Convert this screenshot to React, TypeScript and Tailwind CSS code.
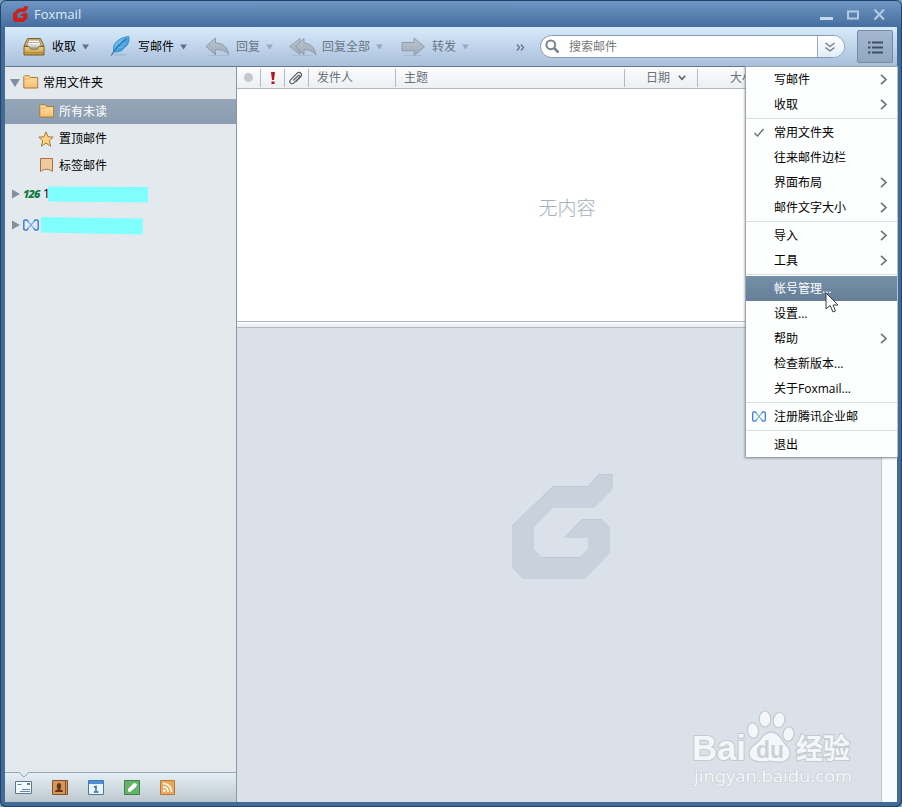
import type { ReactNode } from 'react';

function Caret({ light = false }: { light?: boolean }) {
  return (
    <svg width="7" height="6" viewBox="0 0 8 6" preserveAspectRatio="none" className="shrink-0">
      <path d="M0 .5h8L4 5.5z" fill={light ? '#96a9be' : '#5c728b'} />
    </svg>
  );
}

function FoxLogo() {
  return (
    <svg width="15" height="16" viewBox="0 0 102 105" preserveAspectRatio="none">
      <path d="M0 50 36 16H66L80 0H100V20L80 40H46L28 56V70L36 78H64L70 72V66H48L68 46H92L98 53V80L73 105H14L0 92z" fill="#c9221d" />
    </svg>
  );
}

function InboxIcon() {
  return (
    <svg width="22" height="20" viewBox="0 0 22 20">
      <defs>
        <linearGradient id="tray" x2="0" y2="1"><stop stopColor="#ecd692" /><stop offset="1" stopColor="#bd943c" /></linearGradient>
      </defs>
      <path d="M4.500 1.500h13L21 9H1z" fill="#d8bd7c" stroke="#7d632d" />
      <path d="M5.500 3h11l1.800 7H3.700z" fill="#fff" stroke="#8e7749" strokeWidth=".8" />
      <path d="M5 5.500h12M4.500 8h13" stroke="#a39b8a" strokeWidth=".8" />
      <path d="M1 9.500h4.800c1 0 .8 2.500 2 2.500h6.400c1.200 0 1-2.500 2-2.500H21v8.500H1z" fill="url(#tray)" stroke="#7c5d20" />
      <path d="M2 15.500h18" stroke="#b3893a" />
    </svg>
  );
}

function FeatherIcon() {
  return (
    <svg width="21" height="21" viewBox="0 0 21 21">
      <defs>
        <linearGradient id="quill" x2="1" y2="1"><stop stopColor="#8fd4f8" /><stop offset="1" stopColor="#1d7dca" /></linearGradient>
      </defs>
      <ellipse cx="10" cy="18.800" rx="7" ry="1" fill="#8fb3d3" opacity=".6" />
      <path d="M3.800 15.500C2.800 11 4 7.500 8 4.500 11 2.200 15 .8 18.800.5c.6 3.500-.1 6.500-2 9-1 1.300-2 1.500-3 3-2 2.500-5.500 3.500-8.800 3.500z" fill="url(#quill)" stroke="#2a82c4" strokeWidth=".8" />
      <path d="M1.200 19.500C5 13 9.500 8 16.500 2.800" fill="none" stroke="#1f6dad" strokeWidth="1.100" />
      <path d="m6 11 1.500-4.500M9 8l2-4M8.500 11.500l5-.5M11.500 8l4.500-.5" stroke="#7cc6f0" strokeWidth=".6" />
    </svg>
  );
}

function ArrowDefs() {
  return (
    <defs>
      <linearGradient id="arrowGrey" x2="0" y2="1"><stop stopColor="#bdc7d0" /><stop offset="1" stopColor="#9daab7" /></linearGradient>
    </defs>
  );
}

function ReplyIcon() {
  return (
    <svg width="25" height="20" viewBox="0 0 25 20">
      <ArrowDefs />
      <path d="M1 9.500 10.500 1v5c7 0 12 3.500 13.200 11.500C21 14 17 12.500 10.500 12.700V18z" fill="url(#arrowGrey)" stroke="#8f9dab" />
      <path d="M3 18.500h21" stroke="#a2b5c8" strokeWidth=".7" />
    </svg>
  );
}

function ReplyAllIcon() {
  return (
    <svg width="28" height="20" viewBox="0 0 28 20">
      <path d="M.8 9.500 11 1.500v3L7 9.500l4 5v3z" fill="url(#arrowGrey)" stroke="#8f9dab" />
      <path d="M6.500 9.500 15 1.500v4.700c6 0 10.500 4 12 11.800C24 14 20 12.800 15 12.800v5z" fill="url(#arrowGrey)" stroke="#8f9dab" />
      <path d="M3 18.500h21" stroke="#a2b5c8" strokeWidth=".7" />
    </svg>
  );
}

function ForwardIcon() {
  return (
    <svg width="25" height="20" viewBox="0 0 25 20">
      <path d="M1 5.500h12V1l10.500 8.800L13 18.500v-4.700H1z" fill="url(#arrowGrey)" stroke="#8f9dab" />
      <path d="M2 18.500h18" stroke="#a2b5c8" strokeWidth=".7" />
    </svg>
  );
}

function FolderIcon() {
  return (
    <svg width="16" height="14" viewBox="0 0 16 14" className="shrink-0">
      <defs>
        <linearGradient id="folder" x2="0" y2="1"><stop stopColor="#ffe0a3" /><stop offset="1" stopColor="#f5bf74" /></linearGradient>
      </defs>
      <path d="M.8 13V1.500L1.500.8h4.700l1.300 1.700h7.200V13z" fill="url(#folder)" stroke="#ab7a35" />
      <path d="M1.500 4h5l1-1.500" fill="none" stroke="#d8a45b" strokeWidth=".8" />
    </svg>
  );
}

function InfinityMark({ compact = false }: { compact?: boolean }) {
  return (
    <svg width={compact ? 14 : 16} height={compact ? 11 : 12} viewBox="0 0 16 12" preserveAspectRatio="none" className={compact ? 'ml-px shrink-0' : 'shrink-0'}>
      <g fill="none" strokeWidth="1.500" stroke="#3f7fd4">
        <path d="M5.300 2.800 3.800.9H1.800l-1 1v8.200l1 1h2l1.500-1.900" />
        <path d="m10.700 2.800 1.500-1.900h2l1 1v8.200l-1 1h-2l-1.500-1.900" />
        <path d="m5.300 2.800 5.400 6.400M10.700 2.800 5.300 9.200" stroke="#6aa9ea" strokeWidth="1.100" />
      </g>
    </svg>
  );
}

function Tool({ icon, label, width, disabled, gap }: { icon: ReactNode; label: string; width: string; disabled?: boolean; gap: string }) {
  return (
    <div className={`flex h-full shrink-0 items-center ${width} ${disabled ? 'text-[#687684]' : 'text-black'}`}>
      <span className={`flex shrink-0 items-center ${gap}`}>{icon}</span>
      <span className="mr-1.5">{label}</span>
      <Caret light={disabled} />
    </div>
  );
}

function Separator() {
  return <div className="my-px h-px bg-[#d9dde0]" />;
}

function MenuItem({ label, arrow, active, mark }: { label: string; arrow?: boolean; active?: boolean; mark?: ReactNode }) {
  return (
    <div className={`flex h-[25px] items-center ${active ? 'bg-linear-to-b from-[#7690aa] to-[#667e97] text-white' : 'text-black'}`}>
      <span className="flex w-7 shrink-0 pl-[5px]">{mark}</span>
      <span className="flex-1">{label}</span>
      {arrow && (
        <svg width="8" height="11" viewBox="0 0 8 11" className="mr-[9px]">
          <path d="m1 .8 5 4.700-5 4.700" fill="none" stroke="#737373" strokeWidth="1.700" />
        </svg>
      )}
    </div>
  );
}

function MainMenu() {
  return (
    <div className="absolute top-[66px] left-[745px] w-[153px] rounded-b-xs border border-[#98a5b1] border-r-[#b8c0c8] bg-[#fdfefe] shadow-[-1px_1px_2px_#0003]">
      <MenuItem label="写邮件" arrow />
      <MenuItem label="收取" arrow />
      <Separator />
      <MenuItem
        label="常用文件夹"
        mark={<svg width="16" height="10" viewBox="0 0 16 10"><path d="m3.500 5 3 3 6-7" fill="none" stroke="#737373" strokeWidth="1.500" /></svg>}
      />
      <MenuItem label="往来邮件边栏" />
      <MenuItem label="界面布局" arrow />
      <MenuItem label="邮件文字大小" arrow />
      <Separator />
      <MenuItem label="导入" arrow />
      <MenuItem label="工具" arrow />
      <Separator />
      <MenuItem label="帐号管理..." active />
      <MenuItem label="设置..." />
      <MenuItem label="帮助" arrow />
      <MenuItem label="检查新版本..." />
      <MenuItem label="关于Foxmail..." />
      <Separator />
      <MenuItem label="注册腾讯企业邮" mark={<InfinityMark compact />} />
      <Separator />
      <MenuItem label="退出" />
    </div>
  );
}

function TitleBar() {
  return (
    <header className="flex h-[27px] shrink-0 items-center bg-linear-to-b from-[#7098c5] to-[#466f9f] pl-[13px]">
      <FoxLogo />
      <span className="ml-1.5 font-['Open_Sans'] text-[13px] text-[#dfeafa]">Foxmail</span>
      <svg width="67" height="14" viewBox="0 0 67 14" className="mt-0.5 mr-4 ml-auto">
        <path d="M1 9h13v3H1z" fill="#c5d7eb" />
        <path d="M29 3.500h10v7H29z" fill="none" stroke="#b4cae3" strokeWidth="2" />
        <path d="m55.500 1.500 9.500 10m0-10-9.500 10" stroke="#b4cae3" strokeWidth="2" />
      </svg>
    </header>
  );
}

function Toolbar() {
  return (
    <div className="mx-[5px] flex h-10 shrink-0 items-center border-b border-[#62758a] bg-linear-to-b from-[#d8ebfc] to-[#a9bfda] pl-[18px]">
      <Tool width="w-[87px]" gap="mr-[7px]" icon={<InboxIcon />} label="收取" />
      <Tool width="w-[95px]" gap="mr-[7px]" icon={<FeatherIcon />} label="写邮件" />
      <Tool width="w-[84px]" gap="mr-1.5" icon={<ReplyIcon />} label="回复" disabled />
      <Tool width="w-[112px]" gap="mr-[5px]" icon={<ReplyAllIcon />} label="回复全部" disabled />
      <Tool width="w-[115px]" gap="mr-1.5" icon={<ForwardIcon />} label="转发" disabled />
      <svg width="9" height="7" viewBox="0 0 9 7" className="mt-0.5 mr-[15px]">
        <path d="m1 .5 2.500 3L1 6.500m4-6 2.500 3-2.500 3" fill="none" stroke="#60758b" strokeWidth="1.300" />
      </svg>
      <div className="flex h-[23px] w-[305px] shrink-0 items-center overflow-hidden rounded-full border border-[#849bb3] bg-white">
        <svg width="15" height="15" viewBox="0 0 15 15" className="mr-[9px] ml-1">
          <circle cx="5.800" cy="5.800" r="4.400" fill="none" stroke="#77838f" strokeWidth="2" />
          <path d="m9 9 4.500 4.500" stroke="#77838f" strokeWidth="2.500" />
        </svg>
        <span className="flex-1 text-[#777]">搜索邮件</span>
        <span className="flex h-full w-[27px] items-center border-l border-[#9dacbc] bg-linear-to-b from-white to-[#e1edf8] pl-[7px]">
          <svg width="10" height="10" viewBox="0 0 10 10">
            <path d="m.5 1 4.500 3.500L9.500 1m-9 4.500L5 9l4.500-3.500" fill="none" stroke="#6d7984" strokeWidth="1.300" />
          </svg>
        </span>
      </div>
      <button className="ml-3 flex h-[33px] w-9 shrink-0 items-center justify-center rounded-xs border border-[#748aa5] bg-linear-to-b from-[#a4b8d1] to-[#91a6c1]">
        <svg width="15" height="13" viewBox="0 0 15 13" className="mt-0.5">
          <path d="M0 1.500h2.500m1.500 0h11M0 6.500h2.500m1.500 0h11M0 11.500h2.500m1.500 0h11" stroke="#3d5268" strokeWidth="2.200" />
        </svg>
      </button>
    </div>
  );
}

function Disclosure() {
  return <svg width="8" height="10" viewBox="0 0 8 10" className="mr-[3px] shrink-0"><path d="M0 .5v9L8 5z" fill="#82909e" /></svg>;
}

function Sidebar() {
  return (
    <aside className="flex w-[232px] shrink-0 flex-col border-r border-[#8b96a1] bg-[#e4e9ee] text-black">
      <div className="flex h-8 items-center pl-[5px]">
        <svg width="10" height="8" viewBox="0 0 10 8" className="mr-[3px]"><path d="M0 0h10L5 8z" fill="#7c8d9f" /></svg>
        <span className="-mt-0.5"><FolderIcon /></span>
        <span className="ml-1">常用文件夹</span>
      </div>
      <div className="flex h-[25px] items-center bg-linear-to-b from-[#95a6b8] to-[#8b9db0] pl-[34px] text-white">
        <span className="-mt-0.5"><FolderIcon /></span>
        <span className="ml-1">所有未读</span>
      </div>
      <div className="mt-px flex h-[27px] items-center pl-[33px]">
        <svg width="16" height="16" viewBox="0 0 16 16"><path d="m8 .8 2.100 5 5.100.3-3.900 3.600 1.400 5.500L8 12.200l-4.700 3 1.400-5.500L.8 6.100l5.100-.3z" fill="#fbd282" stroke="#a77d39" /></svg>
        <span className="ml-[5px]">置顶邮件</span>
      </div>
      <div className="flex h-[27px] items-center pl-[34px]">
        <svg width="16" height="14" viewBox="0 0 16 14" className="-mt-0.5"><path d="M1.500.5h12v13c-3-3-9-3-12 0z" fill="#efcaa0" stroke="#a9713d" /></svg>
        <span className="ml-1">标签邮件</span>
      </div>
      <div className="flex h-[30px] items-center pl-[7px]">
        <Disclosure />
        <span className="w-[20px] font-['Open_Sans'] text-[11px] font-extrabold tracking-[-0.9px] text-[#167b47] italic">126</span>
        <span className="w-[5px]">1</span>
        <svg width="100" height="17" viewBox="0 0 100 17"><path d="M0 .5 100 .9v15.600L0 15.500z" fill="#80ffff" /></svg>
      </div>
      <div className="flex h-8 items-center pl-[7px]">
        <Disclosure />
        <InfinityMark />
        <svg width="102" height="18" viewBox="0 0 102 18" className="mt-0.5 ml-0.5"><path d="m0 0 102 1.500-.5 16L0 15.500z" fill="#80ffff" /></svg>
      </div>
      <div className="flex-1" />
      <SidebarDock />
    </aside>
  );
}

function SidebarDock() {
  return (
    <div className="relative flex h-[30px] items-center border-t border-[#98a6b2] bg-linear-to-b from-[#e5eff5] to-[#bdc9cf] pl-[10px]">
      <svg width="10" height="6" viewBox="0 0 10 6" className="absolute -top-px left-[14px]"><path d="M0 0h10L5 5z" fill="#e4e9ee" /><path d="m0 .5 5 4.500 5-4.500" fill="none" stroke="#91a0ac" /></svg>
      <svg width="17" height="14" viewBox="0 0 17 14" className="mr-5">
        <path d="M.5.5h16v12H.5z" fill="#f4f9fb" stroke="#60788d" /><path d="M2.500 3.500h4M7 8.500h8m-10 2h10" stroke="#5d86b4" /><path d="M12 2h3v2h-3z" fill="#5a8c6b" />
      </svg>
      <svg width="17" height="16" viewBox="0 0 17 16" className="mr-[19px]">
        <path d="M.5.500h15v14H.5z" fill="#d59759" stroke="#875028" /><path d="M13.500 1v14" stroke="#875028" /><path d="M3 12c0-1.800 1-2 3-2.500C4 7 4.500 3 7 3s3 4 1 6.500c2 .5 3 .7 3 2.500z" fill="#64351a" />
      </svg>
      <svg width="17" height="16" viewBox="0 0 17 16" className="mr-[19px]">
        <path d="M.5.5h15v14H.5z" fill="#e9f4fb" stroke="#49799d" /><path d="M1 1h14v3H1z" fill="#4c91df" /><path d="m6 7 2-.5V12m-2.200 0h4.700" fill="none" stroke="#426d91" strokeWidth="1.500" />
      </svg>
      <svg width="17" height="16" viewBox="0 0 17 16" className="mr-[19px]">
        <path d="M.5.5h15v14H.5z" fill="#66b26b" stroke="#3c804b" /><path d="m4 9 6-6 3 1-1 3-6 5-2-.5z" fill="#fff" />
      </svg>
      <svg width="16" height="16" viewBox="0 0 16 16">
        <path d="M.5.5h14v14H.5z" fill="#eba95c" stroke="#b87838" /><circle cx="4.300" cy="10.800" r="1.300" fill="#fff" /><path d="M3 7c3 0 5 2 5 5M3 3.500c5 0 8.500 3.500 8.500 8.500" fill="none" stroke="#fff" strokeWidth="1.600" />
      </svg>
    </div>
  );
}

function ListHeader() {
  return (
    <div className="flex h-[22px] shrink-0 items-center border-b border-[#b1b8be] bg-linear-to-b from-[#fafbfc] to-[#edf0f3] text-[#68717a]">
      <span className="flex h-[18px] w-6 items-center justify-center border-r border-[#aebcc8]"><i className="size-[9px] rounded-full bg-[#c1c9ce]" /></span>
      <span className="flex h-[18px] w-6 items-center justify-center border-r border-[#aebcc8]">
        <svg width="4" height="12" viewBox="0 0 4 12"><path d="M0 0h4L3 8H1zM.5 9.500h3V12h-3z" fill="#b41521" /></svg>
      </span>
      <span className="flex h-[18px] w-6 items-center justify-center border-r border-[#aebcc8]">
        <svg width="14" height="14" viewBox="0 0 14 14" className="-ml-1"><path d="m4.800 9.200 4.600-4.600c1.300-1.300 2.800.2 1.500 1.500l-5.400 5.400c-2.600 2.600-5.800-.6-3.200-3.200l5.900-5.900c3-3 6.500.5 3.700 3.500L7.500 10.300" fill="none" stroke="#555c63" strokeWidth="1.200" transform="translate(.5 .3)" /></svg>
      </span>
      <span className="h-[18px] w-[87px] border-r border-[#aebcc8] pl-2 leading-[18px]">发件人</span>
      <span className="h-[18px] w-[229px] border-r border-[#aebcc8] pl-2 leading-[18px]">主题</span>
      <span className="flex h-[18px] w-[73px] items-center border-r border-[#aebcc8] pl-[21px]">
        日期
        <svg width="8" height="6" viewBox="0 0 8 6" className="ml-2"><path d="m.8.8 3.200 3.500L7.200.8" fill="none" stroke="#59646e" strokeWidth="1.600" /></svg>
      </span>
      <span className="pl-8">大小</span>
    </div>
  );
}

function PreviewLogo() {
  return (
    <svg width="102" height="105" viewBox="0 0 102 105" className="mt-[146px] ml-[275px]">
      <path d="M0 52 41 12H76L87 0H101V15L82 34H41L22 53V75L30 83H67L76 75V64H52L70 45H90L98 53V79L73 105H11L0 94z" fill="#c9d1dc" />
      <path d="M0 52 41 12.500H76L87 .5h14M52 64l18-18.500h20M30 83.500h37" fill="none" stroke="#bac5cf" strokeWidth=".7" />
    </svg>
  );
}

function Watermark() {
  return (
    <div className="absolute top-[710px] left-[692px] h-20 w-[164px]">
      <svg width="164" height="80" viewBox="0 0 164 80">
        <g fill="#f4f7f9" stroke="#c3cad0" strokeWidth="1.200">
          <text x="0" y="50" fontFamily="Liberation Sans" fontWeight="700" fontSize="35" textLength="54" lengthAdjust="spacingAndGlyphs" strokeWidth="2.200" paintOrder="stroke">Bai</text>
          <ellipse cx="61" cy="20.500" rx="5.500" ry="7.700" transform="rotate(-8 61 20.500)" />
          <ellipse cx="73" cy="9" rx="5.800" ry="8" />
          <ellipse cx="87" cy="10" rx="5.800" ry="7.700" transform="rotate(12 87 10)" />
          <ellipse cx="96.500" cy="24" rx="5.500" ry="7.200" transform="rotate(10 96.500 24)" />
          <path d="M68 37c6-10 16-11 22 0 4 6 8 7 8 13 0 10-11 10-20 8-10 2-21 1-21-8 0-6 6-8 11-13z" transform="translate(0 -7)" />
          <text x="104" y="49" fontFamily="Noto Sans CJK SC" fontWeight="700" fontSize="28" textLength="54" lengthAdjust="spacingAndGlyphs" strokeWidth="2.200" paintOrder="stroke">经验</text>
        </g>
        <text x="64" y="48" fontFamily="Liberation Sans" fontSize="24" fontWeight="700" textLength="28" lengthAdjust="spacingAndGlyphs" fill="#c9d1d8">du</text>
        <text x="2" y="72" fontFamily="Noto Sans, sans-serif" fontSize="17" textLength="158" lengthAdjust="spacingAndGlyphs" fill="#f4f7f9" stroke="#c7ced4" strokeWidth="1.200" paintOrder="stroke">jingyan.baidu.com</text>
      </svg>
    </div>
  );
}

export default function App() {
  return (
    <div className="h-[807px] w-[902px] overflow-hidden bg-[#75a7b7] font-['Open_Sans','Noto_Sans_CJK_SC',sans-serif] text-xs leading-[18px]">
      <div className="relative flex h-full w-full flex-col overflow-hidden rounded-md bg-[#426b99] shadow-[inset_0_0_0_1px_#213f68]">
        <TitleBar />
        <Toolbar />
        <div className="mx-[5px] mb-[5px] flex min-h-0 flex-1">
          <Sidebar />
          <main className="flex min-w-0 flex-1 flex-col bg-white">
            <ListHeader />
            <div className="flex h-[232px] shrink-0 items-center justify-center text-[19px] font-light text-[#a3b0bc]">
              <span className="mt-1.5">无内容</span>
            </div>
            <div className="h-[7px] shrink-0 border-y border-[#b3b9bd] bg-linear-to-b from-[#fbfcfc] to-[#e9eced]" />
            <div className="flex min-h-0 flex-1">
              <section className="flex-1 bg-[#dae1e8]"><PreviewLogo /></section>
              <div className="w-4 border-l border-[#c0c5ca] bg-[#fafbfc]" />
            </div>
          </main>
        </div>
        <div className="pointer-events-none absolute inset-0 rounded-md border border-[#24436a]" />
        <Watermark />
        <MainMenu />
        <svg width="14" height="21" viewBox="0 0 14 21" className="absolute top-[292px] left-[825px]">
          <path d="M1 1v16l4-3.500 3 6.500 2.500-1L8 13h5z" fill="#fff" stroke="#3c3c46" />
        </svg>
      </div>
    </div>
  );
}
